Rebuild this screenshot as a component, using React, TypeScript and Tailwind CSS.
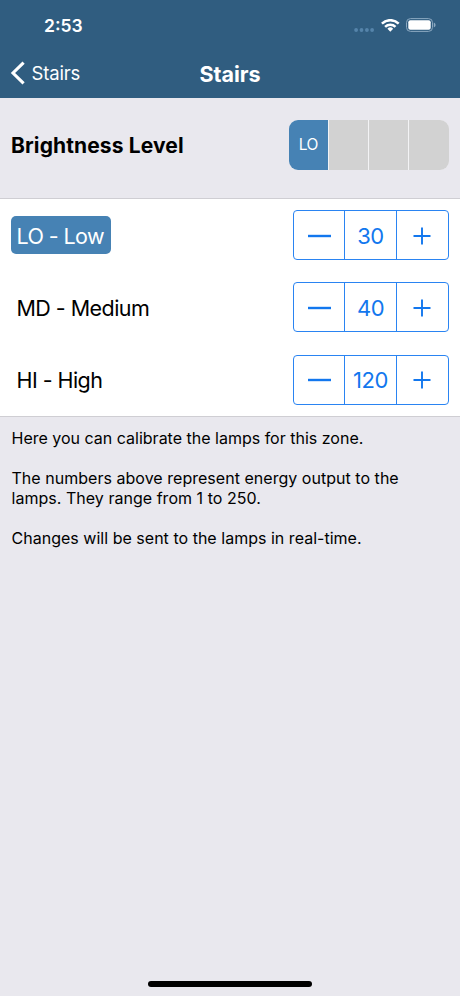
import React from "react";

function StatusBar() {
  return (
    <div className="flex h-[50px] items-center justify-between pt-px pl-[44px] pr-[24px]">
      <span className="text-[17.5px] leading-[20px] font-semibold tracking-[0px]">2:53</span>
      <div className="flex items-center">
        <svg width="21" height="6" viewBox="0 0 21 6" className="mt-[9px]" fill="#5584aa">
          <circle cx="3.1" cy="3" r="1.9" />
          <circle cx="8.5" cy="3" r="1.9" />
          <circle cx="13.9" cy="3" r="1.9" />
          <circle cx="19.1" cy="3" r="1.9" />
        </svg>
        <svg width="20" height="14" viewBox="0 0 20 14" className="ml-[6px]" fill="none" stroke="#fff" strokeWidth="2.5">
          <path d="M1.9 4.6A12 12 0 0 1 18.7 4.6" />
          <path d="M5.1 7.9A7.4 7.4 0 0 1 15.5 7.9" />
          <path d="M10.3 12.7L7.4 9.8A4.1 4.1 0 0 1 13.2 9.8Z" fill="#fff" stroke="none" />
        </svg>
        <svg width="31" height="14" viewBox="0 0 31 14" className="-mt-px ml-[5px]">
          <rect x="1.5" y="0.6" width="26" height="12.8" rx="4" fill="none" stroke="#8ba8c0" />
          <rect x="3.3" y="2.3" width="22.4" height="9.4" rx="2" fill="#fff" />
          <path d="M28.8 4.6Q30.6 5.4 30.6 7T28.8 9.4Z" fill="#8ba8c0" />
        </svg>
      </div>
    </div>
  );
}

function Header() {
  return (
    <header className="h-[98px] bg-[#305d80] text-white">
      <StatusBar />
      <div className="grid h-[48px] grid-cols-[1fr_auto_1fr] items-center">
        <div className="flex items-center pl-[9.5px]">
          <svg width="15" height="24" viewBox="0 0 15 24" className="-mt-[2px]" fill="none" stroke="#fff" strokeWidth="3.1">
            <path d="M13.6 1.6L3 12L13.6 22.4" />
          </svg>
          <span className="-mt-[2px] ml-[7px] text-[18.5px] leading-[24px] font-normal tracking-[-0.15px]">Stairs</span>
        </div>
        <h1 className="-mt-px text-[21.5px] leading-[24px] font-bold">Stairs</h1>
      </div>
    </header>
  );
}

function Stepper({ value }: { value: number }) {
  return (
    <div className="grid h-[50px] w-[156px] grid-cols-3 divide-x divide-[#2a84f2] rounded-[4px] border border-[#2a84f2] text-[#1277ee]">
      <button className="flex items-center justify-center pt-px" aria-label="Decrease">
        <svg width="23" height="4" viewBox="0 0 23 4">
          <path d="M0 2H23" stroke="#1277ee" strokeWidth="2.4" />
        </svg>
      </button>
      <span className="flex items-center justify-center pt-[2px] text-[22px] font-normal tracking-[-0.5px]">{value}</span>
      <button className="flex items-center justify-center pt-px" aria-label="Increase">
        <svg width="18" height="18" viewBox="0 0 18 18" fill="none" stroke="#1277ee" strokeWidth="1.9">
          <path d="M0.5 9H17.5M9 0.5V17.5" />
        </svg>
      </button>
    </div>
  );
}

const levels = [
  { name: "LO - Low", value: 30, selected: true },
  { name: "MD - Medium", value: 40, selected: false },
  { name: "HI - High", value: 120, selected: false },
];

export default function App() {
  return (
    <div className="flex h-[996px] w-[460px] flex-col bg-[#e9e8ee] font-['Inter',sans-serif] text-black">
      <Header />
      <section className="flex h-[101px] items-start justify-between border-b border-[#cfced3] pt-[22px] pr-[11px] pl-[11px]">
        <h2 className="mt-[13px] text-[21px] leading-[26px] font-bold tracking-[0.12px]">Brightness Level</h2>
        <div className="flex h-[50px] w-[160px] gap-[1.5px] overflow-hidden rounded-[9px] bg-[#f3f3f5]">
          <div className="flex w-[38.5px] items-center justify-center bg-[#4682b4] text-[15.5px] font-normal tracking-[-0.6px] text-white">LO</div>
          <div className="w-[38.5px] bg-[#d2d2d2]" />
          <div className="w-[38.5px] bg-[#d2d2d2]" />
          <div className="flex-1 bg-[#d2d2d2]" />
        </div>
      </section>
      <section className="h-[218px] border-b border-[#cfced3] bg-white pt-[11px]">
        {levels.map((level) => (
          <div key={level.name} className="mb-[22.3px] flex h-[50px] items-center justify-between pr-[11px] pl-[11px]">
            <span
              className={
                level.selected
                  ? "flex h-[38px] w-[100px] items-center rounded-[5px] bg-[#4682b4] pt-[2px] pl-[5.5px] text-[21.5px] font-normal tracking-[-0.6px] whitespace-nowrap text-white"
                  : "pt-px pl-[5.5px] text-[21.5px] tracking-[-0.55px]"
              }
            >
              {level.name}
            </span>
            <Stepper value={level.value} />
          </div>
        ))}
      </section>
      <section className="flex-1 px-[11.5px] pt-[12px] text-[16px] leading-[19.9px]">
        <p>Here you can calibrate the lamps for this zone.</p>
        <p className="mt-[20px] tracking-[0.03px]">
          The numbers above represent energy output to the
          <br />
          lamps. They range from 1 to 250.
        </p>
        <p className="mt-[20px] tracking-[0.02px]">Changes will be sent to the lamps in real-time.</p>
      </section>
      <footer className="flex h-[15px] justify-center">
        <div className="h-[6px] w-[164px] rounded-full bg-black" />
      </footer>
    </div>
  );
}
